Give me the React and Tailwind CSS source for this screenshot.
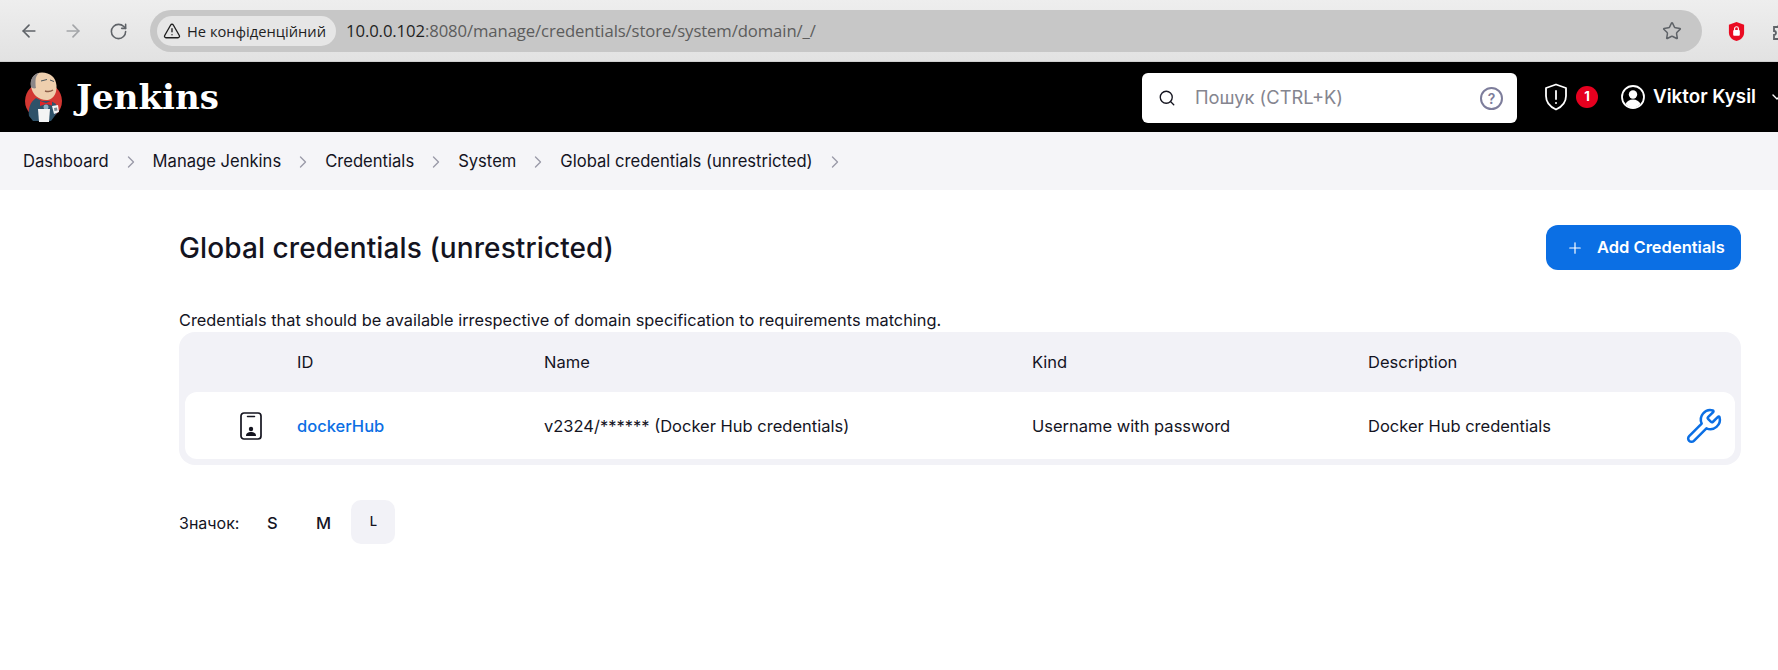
import React from 'react';
import { ArrowLeft, ArrowRight, RotateCw, TriangleAlert, Star, Search, ChevronRight, ChevronDown, Plus, Wrench } from 'lucide-react';

const crumbs = ['Dashboard', 'Manage Jenkins', 'Credentials', 'System', 'Global credentials (unrestricted)'];

const JenkinsLogo = () => (
  <svg viewBox="0 0 37 50" className="w-[37px] h-[50px] shrink-0">
    <circle cx="18.500" cy="29" r="18.500" fill="#d33833" />
    <path d="M6 14C5 6 10 .5 17 .5c8 0 14 5 14.500 13 .3 7-2 13-8.500 14.500C15 29 7 23 6 14z" fill="#eecfae" />
    <path d="M6 15C4.500 8 8 2 14 1c-2.500 2-3.500 5-3.500 8 0 3 0 5 .5 7-2 1-3.500 0-5-1z" fill="#8a8688" />
    <path d="M16 9l6-1.500M25 8l4 1.500" stroke="#49555c" strokeWidth="1" />
    <path d="M20 19c3 1 6 .5 8-1" stroke="#8c5f48" strokeWidth="1.500" fill="none" />
    <path d="M4 44c-1-7 1-14 7-18l6 3 9 0 5 3 1 9-6 8H8z" fill="#2f5269" />
    <path d="M15 29l6 2 6-2.500v5l-6-1.500-6 2z" fill="#e0262b" />
    <circle cx="21" cy="35" r="2.500" fill="#8fb0c4" />
    <path d="M13 37h12l-1 13H14z" fill="#f4f4f4" />
    <path d="M27 34l6-1 1 7-5 2z" fill="#f4f4f4" />
    <path d="M29 36l3-.5.500 3-3 .5z" fill="#7a8a94" />
  </svg>
);

const CredentialIcon = () => (
  <svg viewBox="0 0 22 28" className="w-[22px] h-[28px]" fill="none">
    <rect x="1" y="1" width="20" height="26" rx="3" stroke="#14141f" strokeWidth="1.700" />
    <path d="M7.500 4.500h7" stroke="#14141f" strokeWidth="1.500" strokeLinecap="round" />
    <circle cx="11" cy="17" r="2.200" fill="#14141f" />
    <path d="M6 24c0-3 2.200-4 5-4s5 1 5 4z" fill="#14141f" />
  </svg>
);

const ShieldAlert = () => (
  <svg viewBox="0 0 24 28" className="w-[24px] h-[28px]" fill="none" stroke="#fff" strokeWidth="1.800">
    <path d="M12 1.500l10 3.500v8c0 7-4.500 11-10 13.500C6.500 24 2 20 2 13V5z" strokeLinejoin="round" />
    <path d="M12 8v8" strokeLinecap="round" />
    <circle cx="12" cy="20" r="1" fill="#fff" stroke="none" />
  </svg>
);

const UserIcon = () => (
  <svg viewBox="0 0 24 24" className="w-[24px] h-[24px]">
    <circle cx="12" cy="12" r="11" fill="none" stroke="#fff" strokeWidth="1.800" />
    <circle cx="12" cy="9.500" r="4.200" fill="#fff" />
    <path d="M4.500 19c1.500-3 4-4.500 7.500-4.500s6 1.500 7.500 4.500c-2 2.200-4.500 3.500-7.500 3.500s-5.500-1.300-7.500-3.500z" fill="#fff" />
  </svg>
);

const BrowserBar = () => (
  <div className="h-[62px] bg-gradient-to-b from-[#eeeeee] to-[#e2e2e2] border-b border-[#cfcfcf] flex items-center pl-[19px] pt-[1px] font-['Open_Sans',sans-serif] overflow-hidden">
    <ArrowLeft className="w-[20px] h-[20px] text-[#5f6368] shrink-0" strokeWidth={2} />
    <ArrowRight className="w-[20px] h-[20px] text-[#a3a5a8] ml-[24px] shrink-0" strokeWidth={2} />
    <RotateCw className="w-[19px] h-[19px] text-[#5f6368] ml-[26px] shrink-0" strokeWidth={2} />
    <div className="ml-[22px] w-[1552px] h-[42px] shrink-0 rounded-full bg-[#c7c7c7] flex items-center pl-[7px] pr-[20px]">
      <div className="h-[30px] w-[179px] rounded-full bg-[#e6e6e6] flex items-center pl-[6px] gap-[6px] text-[14.700px] text-[#1f1f1f]">
        <TriangleAlert className="w-[18px] h-[18px] shrink-0" strokeWidth={1.800} />
        <span className="whitespace-nowrap">Не конфіденційний</span>
      </div>
      <div className="ml-[10px] text-[16.700px] text-[#5c5c5c] whitespace-nowrap tracking-[-0.1px]">
        <span className="text-[#1f1f1f]">10.0.0.102</span>:8080/manage/credentials/store/system/domain/_/
      </div>
      <Star className="ml-auto w-[20px] h-[20px] text-[#5f6368]" strokeWidth={1.800} />
    </div>
    <svg viewBox="0 0 20 22" className="w-[19px] h-[21px] ml-[25px] shrink-0">
      <path d="M10 1l8 3v8c0 5-4 8-8 9-4-1-8-4-8-9V4z" fill="#ea0b22" />
      <rect x="6.500" y="9.500" width="7" height="6" rx="1" fill="#fff" />
      <path d="M8 9.500V8a2 2 0 0 1 4 0v1.500" stroke="#fff" strokeWidth="1.200" fill="none" />
    </svg>
    <svg viewBox="0 0 20 20" className="w-[20px] h-[20px] ml-[26px] shrink-0" fill="none" stroke="#5f6368" strokeWidth="1.800">
      <path d="M2 6h4a2 2 0 1 1 4 0h6v4a2 2 0 1 1 0 4v4H2v-4a2 2 0 1 0 0-4z" />
    </svg>
  </div>
);

const TopNav = () => (
  <header className="h-[70px] bg-black flex items-center pl-[25px] overflow-hidden">
    <JenkinsLogo />
    <span className="ml-[14px] font-['DejaVu_Serif',serif] font-bold text-[34px] leading-none text-white">Jenkins</span>
    <div className="ml-auto -mr-[7px] flex items-center shrink-0">
      <div className="w-[375px] h-[50px] mt-[2px] rounded-[6px] bg-white flex items-center pl-[16px] pr-[14px] shrink-0">
        <Search className="w-[18px] h-[18px] text-[#14141f]" strokeWidth={1.800} />
        <span className="ml-[19px] text-[18.300px] text-[#85858f]">Пошук (CTRL+K)</span>
        <span className="ml-auto w-[23px] h-[23px] rounded-full border-2 border-[#7d7d9b] text-[#7d7d9b] text-[14px] font-semibold flex items-center justify-center">?</span>
      </div>
      <div className="ml-[27px] shrink-0 flex items-center">
        <ShieldAlert />
      </div>
      <span className="ml-[8px] shrink-0 w-[22px] h-[22px] rounded-full bg-[#e6001f] text-white text-[13px] font-bold flex items-center justify-center">1</span>
      <div className="ml-[23px] shrink-0 flex items-center gap-[8px]">
        <UserIcon />
        <span className="text-[18.800px] font-semibold text-white whitespace-nowrap">Viktor Kysil</span>
        <ChevronDown className="ml-[5px] w-[16px] h-[16px] text-white" />
      </div>
    </div>
  </header>
);

const Breadcrumbs = () => (
  <nav className="h-[58px] bg-[#f5f5f8] flex items-center pl-[23px] pt-[1px] text-[16.600px] text-[#14141f]">
    {crumbs.map((c) => (
      <React.Fragment key={c}>
        <span className="whitespace-nowrap">{c}</span>
        <ChevronRight className="w-[20px] h-[20px] text-[#9a9aa8] mx-[12px]" strokeWidth={1.600} />
      </React.Fragment>
    ))}
  </nav>
);

const gridCols = 'grid grid-cols-[112px_247px_488px_336px_1fr] items-center';

const CredentialsTable = () => (
  <div className="rounded-[16px] bg-[#f2f2f7] px-[6px] pb-[6px]">
    <div className={`${gridCols} h-[60px] pt-[1px] text-[16.500px] text-[#14141f]`}>
      <span />
      <span>ID</span>
      <span>Name</span>
      <span>Kind</span>
      <span>Description</span>
    </div>
    <div className={`${gridCols} h-[67px] pt-[1px] rounded-[12px] bg-white text-[16.500px] text-[#14141f]`}>
      <span className="flex justify-center pl-[20px]">
        <CredentialIcon />
      </span>
      <a href="#" className="text-[#0b6fe4] font-medium">dockerHub</a>
      <span>v2324/****** (Docker Hub credentials)</span>
      <span>Username with password</span>
      <div className="flex items-center justify-between pr-[12px]">
        <span>Docker Hub credentials</span>
        <Wrench className="w-[38px] h-[38px] text-[#0b6fe4]" strokeWidth={1.600} />
      </div>
    </div>
  </div>
);

export default function App() {
  return (
    <div className="h-[670px] w-[1778px] overflow-hidden bg-white font-['Inter',sans-serif]">
      <BrowserBar />
      <TopNav />
      <Breadcrumbs />
      <main className="pl-[179px] pr-[37px]">
        <div className="flex items-center justify-between pt-[35px]">
          <h1 className="text-[28px] font-medium text-[#14141f] tracking-[0.1px]">Global credentials (unrestricted)</h1>
          <button className="h-[45px] w-[195px] rounded-[12px] bg-[#0b6fe4] flex items-center pl-[20px] gap-[13px] text-white text-[16.500px] font-semibold">
            <Plus className="w-[18px] h-[18px]" strokeWidth={1.600} />
            Add Credentials
          </button>
        </div>
        <p className="mt-[38px] text-[16.350px] leading-[24px] text-[#14141f]">
          Credentials that should be available irrespective of domain specification to requirements matching.
        </p>
        <CredentialsTable />
        <div className="mt-[35px] flex items-center text-[16.500px] text-[#14141f]">
          <span className="text-[16px] pt-[2px]">Значок:</span>
          <span className="ml-[26px] w-[14px] text-center font-medium pt-[2px]">S</span>
          <span className="ml-[34px] w-[20px] text-center font-medium pt-[2px]">M</span>
          <span className="ml-[18px] w-[44px] h-[44px] rounded-[10px] bg-[#f2f2f7] flex items-center justify-center text-[13px] font-medium">L</span>
        </div>
      </main>
    </div>
  );
}
